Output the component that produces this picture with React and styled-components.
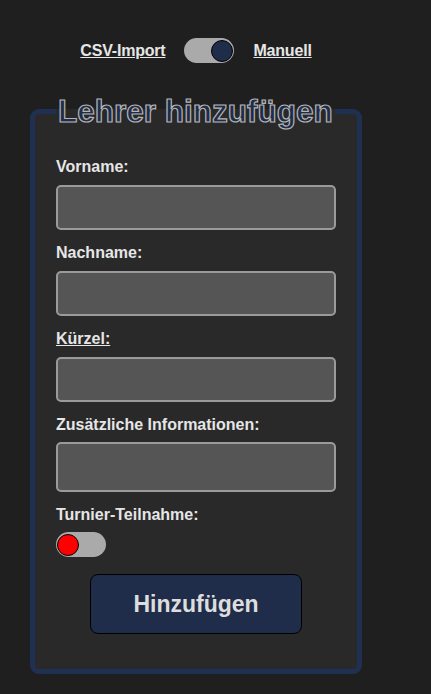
import React from 'react'
import styled, { createGlobalStyle } from 'styled-components'

const GlobalStyle = createGlobalStyle`
  html, body {
    margin: 0;
    padding: 0;
    background-color: #1f1f1f;
    font-family: "Liberation Sans", Arial, sans-serif;
  }
`;

const Page = styled.div`
  width: 332px;
  padding: 38px 0 19px 30px;
`;

const ModeRow = styled.div`
  display: flex;
  flex-direction: row;
  align-items: center;
  justify-content: center;
  gap: 19px;
  margin-bottom: 30px;
`;

const ModeLink = styled.a`
  font-size: 16px;
  font-weight: 700;
  letter-spacing: -0.2px;
  color: #e6e6e6;
  text-decoration: underline;
  cursor: pointer;
`;

const Track = styled.div`
  display: flex;
  flex-direction: row;
  align-items: center;
  justify-content: ${props => (props.$on ? 'flex-end' : 'flex-start')};
  box-sizing: border-box;
  width: 50px;
  height: 25px;
  padding: 0 1px;
  border-radius: 13px;
  background-color: #aaaaaa;
`;

const Knob = styled.div`
  width: 22px;
  height: 22px;
  box-sizing: border-box;
  border-radius: 50%;
  border: 1px solid #000;
  background-color: ${props => props.$color};
`;

const Card = styled.fieldset`
  margin: 0;
  padding: 29px 21px 35px 21px;
  border: 5px solid #1f3052;
  border-radius: 9px;
  background-color: #292929;
  display: flex;
  flex-direction: column;
`;

const Title = styled.legend`
  padding: 0 2px;
  font-size: 31.5px;
  font-weight: 700;
  line-height: 36px;
  color: #1f2d4a;
  -webkit-text-stroke: 1.2px #b4b4b4;
`;

const Field = styled.div`
  display: flex;
  flex-direction: column;
  margin-bottom: 14px;
`;

const Label = styled.label`
  font-size: 16px;
  font-weight: 700;
  line-height: 18px;
  color: #e6e6e6;
  margin-bottom: ${props => (props.$tight ? '8px' : '9px')};
  text-decoration: ${props => (props.$underline ? 'underline' : 'none')};
`;

const Input = styled.input`
  box-sizing: border-box;
  width: 280px;
  height: ${props => props.$h || 45}px;
  border: 2px solid #9a9a9a;
  border-radius: 5px;
  background-color: #555555;
  color: #eee;
  font-size: 16px;
  outline: none;
`;

const ButtonRow = styled.div`
  display: flex;
  justify-content: center;
  margin-top: 3px;
`;

const AddButton = styled.button`
  width: 212px;
  height: 60px;
  border: 1px solid #000;
  border-radius: 8px;
  background-color: #1f2d4a;
  color: #dddddd;
  font-family: "Liberation Sans", Arial, sans-serif;
  font-size: 23px;
  font-weight: 700;
  cursor: pointer;
`;

export default function App() {
  return (
    <>
      <GlobalStyle />
      <Page>
        <ModeRow>
          <ModeLink>CSV-Import</ModeLink>
          <Track $on>
            <Knob $color="#1f2d4a" />
          </Track>
          <ModeLink>Manuell</ModeLink>
        </ModeRow>
        <Card>
          <Title>Lehrer hinzufügen</Title>
          <Field>
            <Label>Vorname:</Label>
            <Input type="text" />
          </Field>
          <Field>
            <Label>Nachname:</Label>
            <Input type="text" />
          </Field>
          <Field>
            <Label $underline>Kürzel:</Label>
            <Input type="text" />
          </Field>
          <Field>
            <Label $tight>Zusätzliche Informationen:</Label>
            <Input type="text" $h={50} />
          </Field>
          <Field>
            <Label $tight>Turnier-Teilnahme:</Label>
            <Track>
              <Knob $color="#ff0000" />
            </Track>
          </Field>
          <ButtonRow>
            <AddButton>Hinzufügen</AddButton>
          </ButtonRow>
        </Card>
      </Page>
    </>
  )
}
